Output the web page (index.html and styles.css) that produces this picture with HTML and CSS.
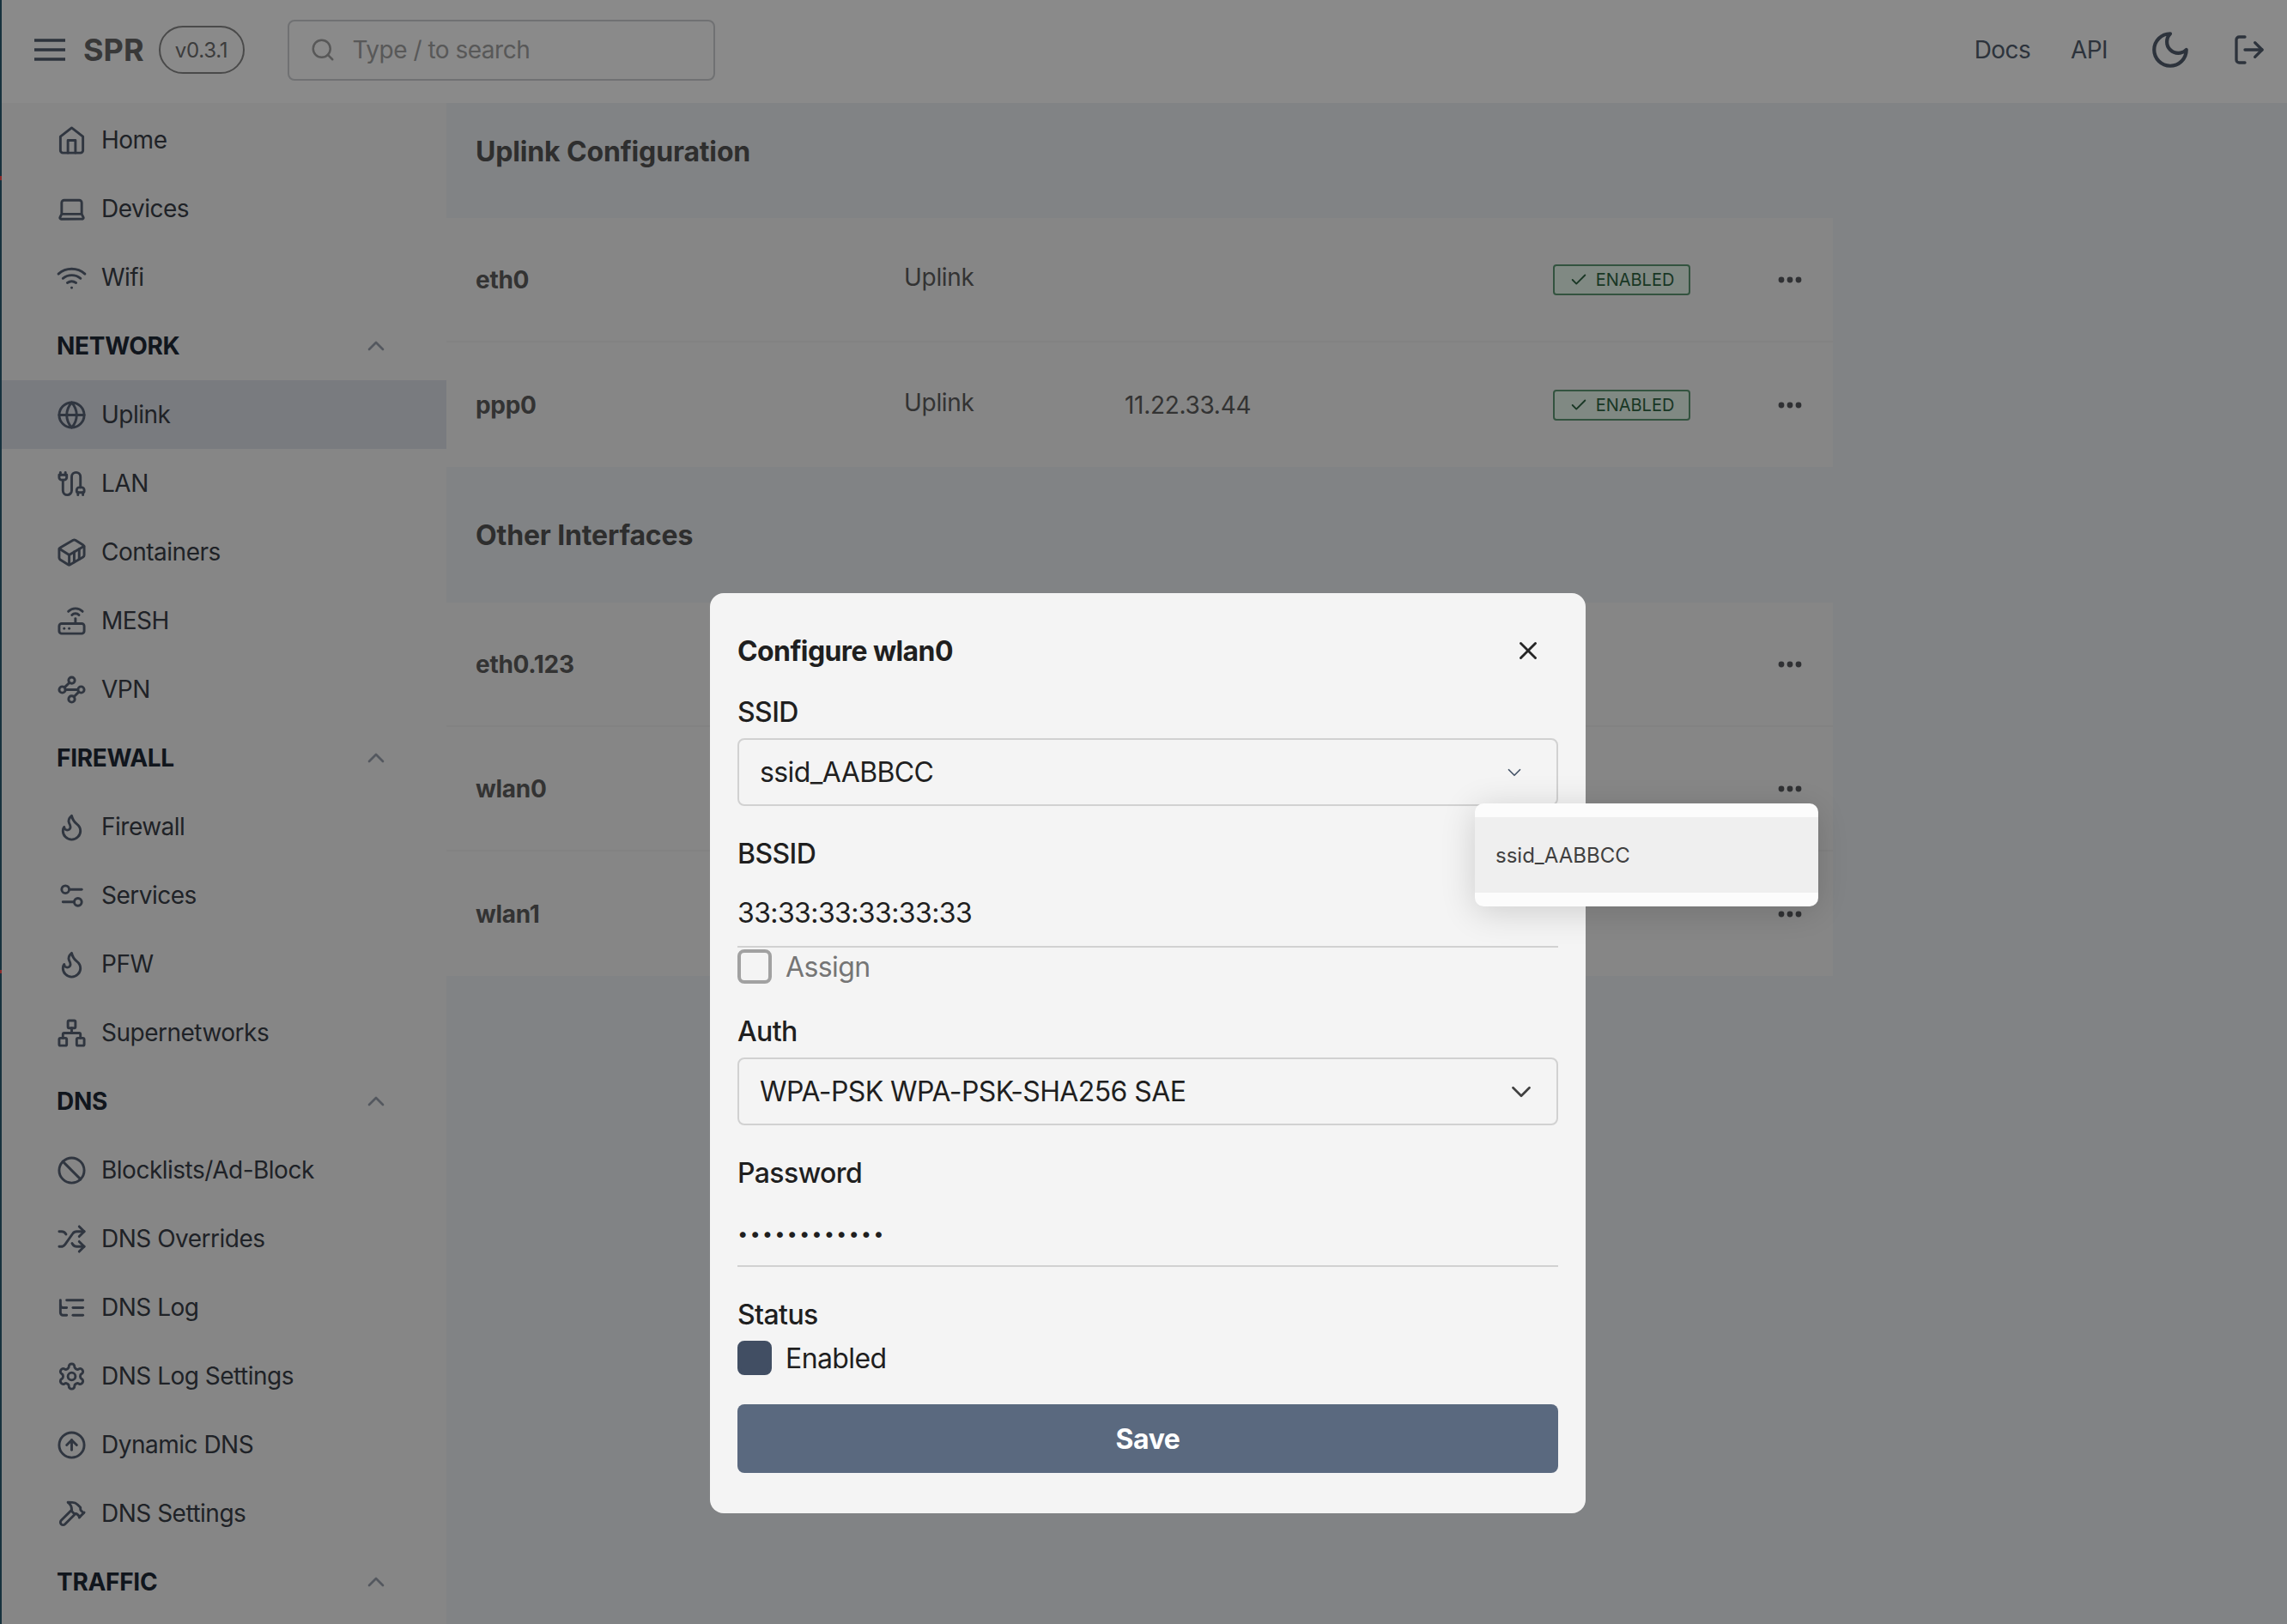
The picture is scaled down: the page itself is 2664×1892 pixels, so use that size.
FILE: index.html
```html
<!DOCTYPE html>
<html lang="en">
<head>
	<meta charset="UTF-8">
	<title>SPR</title>
	<link rel="stylesheet" href="styles.css">
</head>
<body>
	<svg class="defs" width="0" height="0">
		<symbol id="i-home" viewBox="0 0 24 24"><path d="M3 9l9-7 9 7v11a2 2 0 0 1-2 2H5a2 2 0 0 1-2-2z"/><path d="M9 22V12h6v10"/></symbol>
		<symbol id="i-laptop" viewBox="0 0 24 24"><path d="M20 16V7a2 2 0 0 0-2-2H6a2 2 0 0 0-2 2v9m16 0H4m16 0 1.28 2.55a1 1 0 0 1-.9 1.45H3.62a1 1 0 0 1-.9-1.45L4 16"/></symbol>
		<symbol id="i-wifi" viewBox="0 0 24 24"><path d="M5 12.55a11 11 0 0 1 14.08 0"/><path d="M1.42 9a16 16 0 0 1 21.16 0"/><path d="M8.53 16.11a6 6 0 0 1 6.95 0"/><path d="M12 20h.01"/></symbol>
		<symbol id="i-globe" viewBox="0 0 24 24"><circle cx="12" cy="12" r="10"/><path d="M2 12h20"/><path d="M12 2a15.3 15.3 0 0 1 4 10 15.3 15.3 0 0 1-4 10 15.3 15.3 0 0 1-4-10 15.3 15.3 0 0 1 4-10z"/></symbol>
		<symbol id="i-cable" viewBox="0 0 24 24"><path d="M17 21v-2a1 1 0 0 1-1-1v-1a2 2 0 0 1 2-2h2a2 2 0 0 1 2 2v1a1 1 0 0 1-1 1"/><path d="M19 15V6.5a1 1 0 0 0-7 0v11a1 1 0 0 1-7 0V9"/><path d="M21 21v-2h-4"/><path d="M3 5V3"/><path d="M7 5V3"/><path d="M4 9a2 2 0 0 1-2-2V5h6v2a2 2 0 0 1-2 2Z"/></symbol>
		<symbol id="i-container" viewBox="0 0 24 24"><path d="M22 7.7c0-.6-.4-1.2-.8-1.5l-6.3-3.9a1.72 1.72 0 0 0-1.7 0l-10.3 6c-.5.2-.9.8-.9 1.4v6.6c0 .5.4 1.2.8 1.5l6.3 3.9a1.72 1.72 0 0 0 1.7 0l10.3-6c.5-.3.9-1 .9-1.5Z"/><path d="M10 21.9V14L2.1 9.1"/><path d="m10 14 11.9-6.9"/><path d="M14 19.8v-8.1"/><path d="M18 17.5V9.4"/></symbol>
		<symbol id="i-router" viewBox="0 0 24 24"><rect x="2" y="14" width="20" height="8" rx="2"/><path d="M6.01 18H6"/><path d="M10.01 18H10"/><path d="M15 10v4"/><path d="M17.84 7.17a4 4 0 0 0-5.66 0"/><path d="M20.66 4.34a8 8 0 0 0-11.31 0"/></symbol>
		<symbol id="i-waypoints" viewBox="0 0 24 24"><circle cx="12" cy="4.5" r="2.5"/><path d="m10.2 6.3-3.9 3.9"/><circle cx="4.5" cy="12" r="2.5"/><path d="M7 12h10"/><circle cx="19.5" cy="12" r="2.5"/><path d="m13.8 17.7 3.9-3.9"/><circle cx="12" cy="19.5" r="2.5"/></symbol>
		<symbol id="i-flame" viewBox="0 0 24 24"><path d="M8.5 14.5A2.5 2.5 0 0 0 11 12c0-1.38-.5-2-1-3-1.072-2.143-.224-4.054 2-6 .5 2.5 2 4.9 4 6.5 2 1.6 3 3.5 3 5.5a7 7 0 1 1-14 0c0-1.153.433-2.294 1-3a2.5 2.5 0 0 0 2.5 2.5z"/></symbol>
		<symbol id="i-sliders" viewBox="0 0 24 24"><path d="M20 7h-9"/><path d="M14 17H5"/><circle cx="17" cy="17" r="3"/><circle cx="7" cy="7" r="3"/></symbol>
		<symbol id="i-network" viewBox="0 0 24 24"><rect x="16" y="16" width="6" height="6" rx="1"/><rect x="2" y="16" width="6" height="6" rx="1"/><rect x="9" y="2" width="6" height="6" rx="1"/><path d="M5 16v-3a1 1 0 0 1 1-1h12a1 1 0 0 1 1 1v3"/><path d="M12 12V8"/></symbol>
		<symbol id="i-ban" viewBox="0 0 24 24"><circle cx="12" cy="12" r="10"/><path d="m4.9 4.9 14.2 14.2"/></symbol>
		<symbol id="i-shuffle" viewBox="0 0 24 24"><path d="M2 18h1.4c1.3 0 2.5-.6 3.3-1.7l6.1-8.6c.7-1.1 2-1.7 3.3-1.7H22"/><path d="m18 2 4 4-4 4"/><path d="M2 6h1.9c1.5 0 2.9.9 3.6 2.2"/><path d="M22 18h-5.9c-1.3 0-2.6-.7-3.3-1.8l-.5-.8"/><path d="m18 14 4 4-4 4"/></symbol>
		<symbol id="i-tree" viewBox="0 0 24 24"><path d="M21 12h-8"/><path d="M21 6H8"/><path d="M21 18h-8"/><path d="M3 6v4c0 1.1.9 2 2 2h3"/><path d="M3 10v6c0 1.1.9 2 2 2h3"/></symbol>
		<symbol id="i-gear" viewBox="0 0 24 24"><path d="M12.22 2h-.44a2 2 0 0 0-2 2v.18a2 2 0 0 1-1 1.73l-.43.25a2 2 0 0 1-2 0l-.15-.08a2 2 0 0 0-2.73.73l-.22.38a2 2 0 0 0 .73 2.73l.15.1a2 2 0 0 1 1 1.72v.51a2 2 0 0 1-1 1.74l-.15.09a2 2 0 0 0-.73 2.73l.22.38a2 2 0 0 0 2.73.73l.15-.08a2 2 0 0 1 2 0l.43.25a2 2 0 0 1 1 1.73V20a2 2 0 0 0 2 2h.44a2 2 0 0 0 2-2v-.18a2 2 0 0 1 1-1.73l.43-.25a2 2 0 0 1 2 0l.15.08a2 2 0 0 0 2.73-.73l.22-.39a2 2 0 0 0-.73-2.73l-.15-.08a2 2 0 0 1-1-1.74v-.5a2 2 0 0 1 1-1.74l.15-.09a2 2 0 0 0 .73-2.73l-.22-.38a2 2 0 0 0-2.73-.73l-.15.08a2 2 0 0 1-2 0l-.43-.25a2 2 0 0 1-1-1.73V4a2 2 0 0 0-2-2z"/><circle cx="12" cy="12" r="3"/></symbol>
		<symbol id="i-up" viewBox="0 0 24 24"><circle cx="12" cy="12" r="10"/><path d="m16 12-4-4-4 4"/><path d="M12 16V8"/></symbol>
		<symbol id="i-hammer" viewBox="0 0 24 24"><path d="m15 12-8.373 8.373a1 1 0 1 1-3-3L12 9"/><path d="m18 15 4-4"/><path d="m21.5 11.5-1.914-1.914A2 2 0 0 1 19 8.172V7l-2.26-2.26a6 6 0 0 0-4.202-1.756L9 2.96l.92.82A6.18 6.18 0 0 1 12 8.4V10l2 2h1.172a2 2 0 0 1 1.414.586L18.5 14.5"/></symbol>
		<symbol id="i-chevron-up" viewBox="0 0 24 24"><path d="m18 15-6-6-6 6"/></symbol>
		<symbol id="i-chevron-down" viewBox="0 0 24 24"><path d="m6 9 6 6 6-6"/></symbol>
		<symbol id="i-check" viewBox="0 0 24 24"><path d="M20 6 9 17l-5-5"/></symbol>
		<symbol id="i-dots" viewBox="0 0 28 8"><circle cx="4" cy="4" r="3.4"/><circle cx="14" cy="4" r="3.4"/><circle cx="24" cy="4" r="3.4"/></symbol>
	</svg>

	<div class="app">
		<header class="topbar">
			<svg class="menu-icon" viewBox="0 0 36 26"><path d="M0 2h36M0 13h36M0 24h36"/></svg>
			<span class="brand">SPR</span>
			<span class="version">v0.3.1</span>
			<div class="search">
				<svg class="search-icon" viewBox="0 0 24 24"><circle cx="11" cy="11" r="8"/><path d="m21 21-4.3-4.3"/></svg>
				<span>Type / to search</span>
			</div>
			<nav class="toplinks">
				<a class="doc-link">Docs</a>
				<a class="api-link">API</a>
				<svg class="moon" viewBox="0 0 24 24"><path d="M12 3a6 6 0 0 0 9 9 9 9 0 1 1-9-9Z"/></svg>
				<svg class="logout" viewBox="0 0 24 24"><path d="M9 21H5a2 2 0 0 1-2-2V5a2 2 0 0 1 2-2h4"/><path d="m16 17 5-5-5-5"/><path d="M21 12H9"/></svg>
			</nav>
		</header>

		<div class="layout">
			<aside class="sidebar">
				<a class="nav-item"><svg class="icon"><use href="#i-home"/></svg>Home</a>
				<a class="nav-item"><svg class="icon"><use href="#i-laptop"/></svg>Devices</a>
				<a class="nav-item"><svg class="icon"><use href="#i-wifi"/></svg>Wifi</a>
				<div class="nav-section">NETWORK<svg class="chevron"><use href="#i-chevron-up"/></svg></div>
				<a class="nav-item active"><svg class="icon"><use href="#i-globe"/></svg>Uplink</a>
				<a class="nav-item"><svg class="icon"><use href="#i-cable"/></svg>LAN</a>
				<a class="nav-item"><svg class="icon"><use href="#i-container"/></svg>Containers</a>
				<a class="nav-item"><svg class="icon"><use href="#i-router"/></svg>MESH</a>
				<a class="nav-item"><svg class="icon"><use href="#i-waypoints"/></svg>VPN</a>
				<div class="nav-section">FIREWALL<svg class="chevron"><use href="#i-chevron-up"/></svg></div>
				<a class="nav-item"><svg class="icon"><use href="#i-flame"/></svg>Firewall</a>
				<a class="nav-item"><svg class="icon"><use href="#i-sliders"/></svg>Services</a>
				<a class="nav-item"><svg class="icon"><use href="#i-flame"/></svg>PFW</a>
				<a class="nav-item"><svg class="icon"><use href="#i-network"/></svg>Supernetworks</a>
				<div class="nav-section">DNS<svg class="chevron"><use href="#i-chevron-up"/></svg></div>
				<a class="nav-item"><svg class="icon"><use href="#i-ban"/></svg>Blocklists/Ad-Block</a>
				<a class="nav-item"><svg class="icon"><use href="#i-shuffle"/></svg>DNS Overrides</a>
				<a class="nav-item"><svg class="icon"><use href="#i-tree"/></svg>DNS Log</a>
				<a class="nav-item"><svg class="icon"><use href="#i-gear"/></svg>DNS Log Settings</a>
				<a class="nav-item"><svg class="icon"><use href="#i-up"/></svg>Dynamic DNS</a>
				<a class="nav-item"><svg class="icon"><use href="#i-hammer"/></svg>DNS Settings</a>
				<div class="nav-section">TRAFFIC<svg class="chevron"><use href="#i-chevron-up"/></svg></div>
			</aside>

			<main class="content">
				<h2 class="section-title">Uplink Configuration</h2>
				<div class="iface-list">
					<div class="iface-row">
						<span class="iface-name">eth0</span>
						<span class="iface-type">Uplink</span>
						<span class="iface-ip"></span>
						<span class="badge"><svg class="badge-check"><use href="#i-check"/></svg>ENABLED</span>
						<svg class="dots"><use href="#i-dots"/></svg>
					</div>
					<div class="iface-row">
						<span class="iface-name">ppp0</span>
						<span class="iface-type">Uplink</span>
						<span class="iface-ip">11.22.33.44</span>
						<span class="badge"><svg class="badge-check"><use href="#i-check"/></svg>ENABLED</span>
						<svg class="dots"><use href="#i-dots"/></svg>
					</div>
				</div>

				<h2 class="section-title second">Other Interfaces</h2>
				<div class="iface-list">
					<div class="iface-row">
						<span class="iface-name">eth0.123</span>
						<span></span><span></span><span></span>
						<svg class="dots"><use href="#i-dots"/></svg>
					</div>
					<div class="iface-row">
						<span class="iface-name">wlan0</span>
						<span></span><span></span><span></span>
						<svg class="dots"><use href="#i-dots"/></svg>
					</div>
					<div class="iface-row">
						<span class="iface-name">wlan1</span>
						<span></span><span></span><span></span>
						<svg class="dots"><use href="#i-dots"/></svg>
					</div>
				</div>
			</main>
		</div>
	</div>

	<div class="backdrop">
		<div class="modal">
			<div class="modal-head">
				<h3>Configure wlan0</h3>
				<svg class="close" viewBox="0 0 24 24"><path d="M18 6 6 18"/><path d="m6 6 12 12"/></svg>
			</div>

			<div class="field first">
				<label>SSID</label>
				<div class="select">ssid_AABBCC<svg class="caret small"><use href="#i-chevron-down"/></svg></div>
			</div>

			<div class="field">
				<label>BSSID</label>
				<div class="input">33:33:33:33:33:33</div>
				<div class="check-row tight"><span class="box"></span><span class="muted">Assign</span></div>
			</div>

			<div class="field">
				<label>Auth</label>
				<div class="select">WPA-PSK WPA-PSK-SHA256 SAE<svg class="caret"><use href="#i-chevron-down"/></svg></div>
			</div>

			<div class="field">
				<label>Password</label>
				<div class="input password">••••••••••••</div>
			</div>

			<div class="field">
				<label>Status</label>
				<div class="check-row"><span class="box checked"></span><span>Enabled</span></div>
			</div>

			<button class="save">Save</button>

			<div class="popup">
				<div class="popup-item">ssid_AABBCC</div>
			</div>
		</div>
	</div>
</body>
</html>
```

FILE: styles.css
```css
*{
  padding: 0;
  margin: 0;
  box-sizing: border-box;
}

html, body{
  height: 100%;
  overflow: hidden;
}

/* the 2px edge on the left belongs to whatever was behind the window */
body{
  font-family: "Inter", "Liberation Sans", sans-serif;
  font-size: 28px;
  letter-spacing: -.3px;
  color: #3a3f48;
  padding-left: 2px;
  background: linear-gradient(#2b5d73 205px, #ff4e4e 205px, #ff4e4e 210px, #2b5d73 210px, #2b5d73 1130px, #ff4e4e 1130px, #ff4e4e 1134px, #2b5d73 1134px);
}

.app{
  background: #fff;
  height: 100%;
}

.defs{
  position: absolute;
}

svg{
  fill: none;
  stroke: currentColor;
  stroke-width: 2;
  stroke-linecap: round;
  stroke-linejoin: round;
  flex-shrink: 0;
}

/* top bar */
.topbar{
  height: 120px;
  background: #fff;
  display: flex;
  align-items: center;
  padding-left: 38px;
  padding-bottom: 4px;
}

.menu-icon{
  width: 36px;
  height: 26px;
  stroke-width: 3.4;
  color: #535f70;
  margin-right: 21px;
}

.brand{
  font-size: 36px;
  font-weight: 700;
  letter-spacing: 0;
  color: #686868;
  margin-right: 17px;
}

.version{
  width: 100px;
  height: 56px;
  border: 2px solid #898989;
  border-radius: 28px;
  font-size: 24px;
  display: flex;
  align-items: center;
  justify-content: center;
  color: #6f6f6f;
  margin-right: 50px;
}

.search{
  width: 498px;
  height: 71px;
  border: 2px solid #cfd1d4;
  border-radius: 8px;
  display: flex;
  align-items: center;
  padding-left: 24px;
  gap: 20px;
  color: #a3a3a3;
  font-size: 28px;
  letter-spacing: -.5px;
}

.search-icon{
  width: 30px;
  height: 30px;
}

.toplinks{
  margin-left: auto;
  display: flex;
  align-items: center;
  color: #535f70;
  padding-right: 24px;
  letter-spacing: -.6px;
}

.doc-link{
  margin-right: 47px;
}

.api-link{
  margin-right: 48px;
}

.moon{
  width: 50px;
  height: 50px;
  margin-right: 47px;
}

.logout{
  width: 40px;
  height: 40px;
}

/* sidebar */
.layout{
  display: flex;
  height: calc(100vh - 120px);
}

.sidebar{
  width: 518px;
  padding-top: 3px;
  background: #f8f8f8;
  flex-shrink: 0;
  letter-spacing: -.5px;
}

.nav-item{
  height: 80px;
  display: flex;
  align-items: center;
  padding-left: 64px;
  gap: 17px;
}

.nav-item.active{
  background: #e0e3eb;
}

.icon{
  width: 35px;
  height: 35px;
  color: #596477;
}

.nav-section{
  height: 80px;
  display: flex;
  align-items: center;
  padding-left: 64px;
  font-weight: 700;
  letter-spacing: -.3px;
  color: #1f2937;
}

.chevron{
  width: 32px;
  height: 32px;
  color: #9ca3af;
  margin-left: auto;
  margin-right: 66px;
}

/* interface tables */
.content{
  flex: 1;
  background: #eff2f5;
}

.section-title{
  height: 134px;
  padding: 33px 0 0 34px;
  font-size: 32px;
  line-height: 48px;
  font-weight: 700;
  letter-spacing: -.15px;
  color: #565656;
}

.section-title.second{
  height: 158px;
  padding-top: 56px;
}

.iface-list{
  width: 1615px;
  background: #f8f8f8;
}

.iface-row{
  height: 145px;
  padding: 0 36px 0 34px;
  display: grid;
  grid-template-columns: 499px 257px 499px 160px 1fr;
  align-items: center;
  border-bottom: 2px solid #f0f0f0;
  color: #5f5f5f;
}

.iface-row:last-child{
  border-bottom: none;
}

.iface-name{
  font-weight: 700;
}

.iface-type{
  margin-top: -6px;
}

.badge{
  width: 160px;
  height: 36px;
  border: 2px solid #5f9a75;
  border-radius: 4px;
  background: #ecfdf3;
  color: #2f6644;
  font-size: 20px;
  letter-spacing: 0;
  display: flex;
  align-items: center;
  justify-content: center;
  gap: 9px;
}

.badge-check{
  width: 22px;
  height: 22px;
}

.dots{
  width: 28px;
  height: 8px;
  justify-self: end;
  fill: #5a5c60;
  stroke: none;
}

/* modal */
.backdrop{
  position: fixed;
  inset: 0;
  background: rgba(0, 0, 0, .46);
  padding: 691px 0 0 827px;
}

.modal{
  position: relative;
  width: 1020px;
  height: 1072px;
  background: #f4f4f4;
  border-radius: 16px;
  padding: 43px 32px 0;
  color: #1f1f1f;
  font-size: 32px;
  letter-spacing: -.6px;
}

.modal-head{
  display: flex;
  align-items: center;
  justify-content: space-between;
  height: 48px;
  margin-bottom: 24px;
}

.modal-head h3{
  font-size: 32px;
  font-weight: 700;
}

.close{
  width: 34px;
  height: 34px;
  margin-right: 18px;
  color: #262626;
}

.field{
  margin-top: 32px;
}

.field.first{
  margin-top: 0;
}

.field label{
  display: block;
  height: 48px;
  line-height: 48px;
  margin-bottom: 6px;
  font-weight: 500;
}

.select{
  height: 79px;
  border: 2px solid #d1d1d1;
  border-radius: 8px;
  display: flex;
  align-items: center;
  justify-content: space-between;
  padding: 0 24px;
}

.caret{
  width: 38px;
  height: 38px;
  margin-right: -2px;
  color: #404040;
  stroke-width: 1.7;
}

.caret.small{
  width: 26px;
  height: 26px;
  margin-right: 12px;
  color: #475569;
  stroke-width: 1.6;
}

.input{
  height: 79px;
  display: flex;
  align-items: center;
  border-bottom: 2px solid #d1d1d1;
}

.input.password{
  padding-top: 2px;
  font-size: 22px;
  letter-spacing: 2px;
}

.check-row{
  height: 40px;
  display: flex;
  align-items: center;
  gap: 16px;
}

.check-row.tight{
  margin-top: 2px;
}

.box{
  width: 40px;
  height: 40px;
  border: 4px solid #a1a1a1;
  border-radius: 8px;
}

.box.checked{
  background: #414e63;
  border-color: #414e63;
}

.muted{
  color: #757575;
}

.save{
  display: block;
  width: 100%;
  height: 80px;
  margin-top: 34px;
  border: none;
  border-radius: 8px;
  background: #5a697f;
  color: #fff;
  font-family: inherit;
  font-size: 32px;
  font-weight: 700;
  letter-spacing: -.4px;
}

/* dropdown over the modal */
.popup{
  position: absolute;
  left: 891px;
  top: 245px;
  width: 400px;
  height: 120px;
  padding: 16px 0;
  background: #fcfcfc;
  border-radius: 10px;
  box-shadow: 0 6px 40px rgba(0, 0, 0, .16);
}

.popup-item{
  height: 88px;
  background: #efefef;
  display: flex;
  align-items: center;
  padding-left: 24px;
  font-size: 24px;
  letter-spacing: 0;
  color: #404040;
}
```
